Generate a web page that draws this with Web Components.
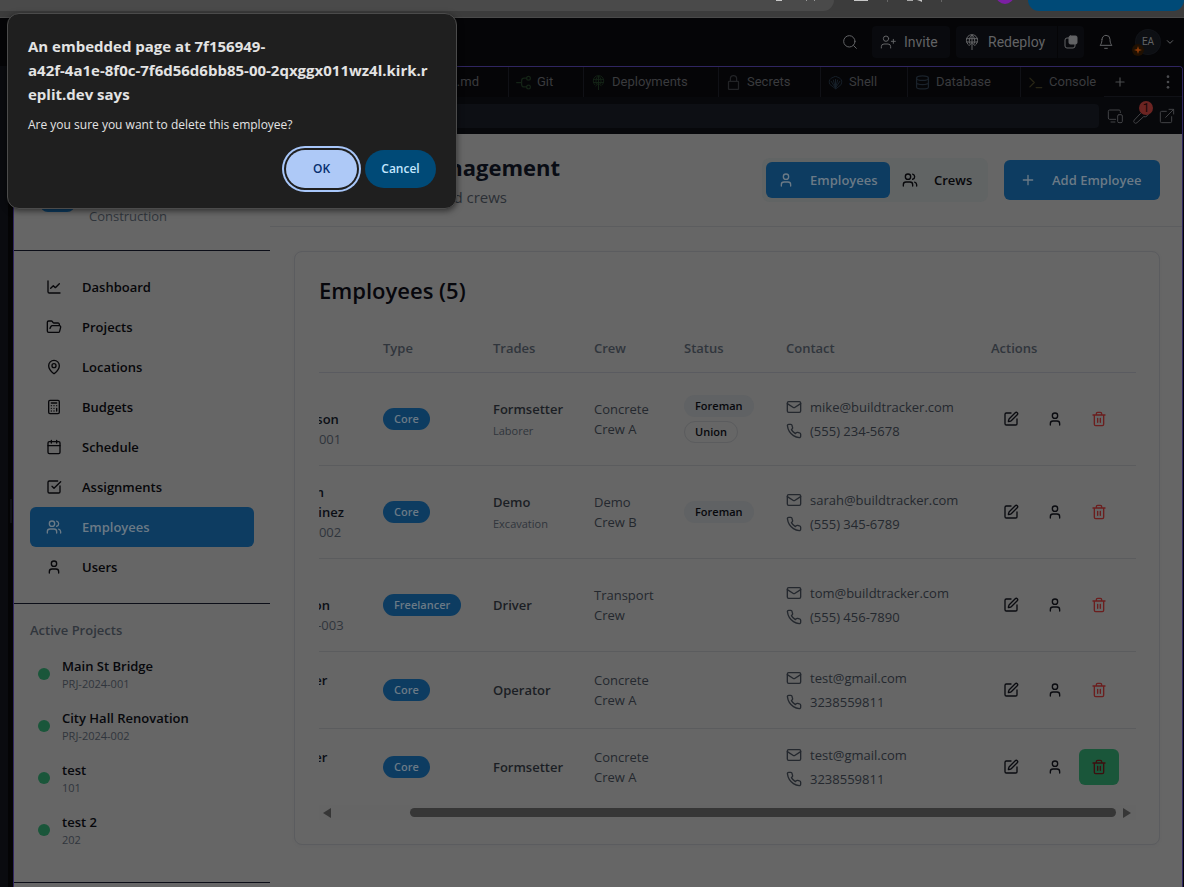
<!DOCTYPE html>
<html lang="en">
<head>
<meta charset="utf-8">
<title>BuildTracker – Employees</title>
<style>
  html, body { margin: 0; height: 100%; }
  body {
    background: #050507;
    overflow: hidden;
    font-family: "Open Sans", "Noto Sans", sans-serif;
    font-size: 13px;
    line-height: 20px;
    color: #07080c;
  }
</style>
</head>
<body>
<app-window></app-window>
<confirm-dialog origin-a="An embedded page at 7f156949-" origin-b="a42f-4a1e-8f0c-7f6d56d6bb85-00-2qxggx011wz4l.kirk.r" origin-c="eplit.dev says">Are you sure you want to delete this employee?</confirm-dialog>

<script>
const ICONS = {
  chart: '<path d="M3 3v16a2 2 0 0 0 2 2h16"/><path d="m7 14 4-4 3 3 6-6"/>',
  folder: '<path d="m6 14 1.5-2.9A2 2 0 0 1 9.24 10H20a2 2 0 0 1 1.94 2.5l-1.54 6a2 2 0 0 1-1.95 1.5H4a2 2 0 0 1-2-2V5a2 2 0 0 1 2-2h3.9a2 2 0 0 1 1.69.9l.81 1.2a2 2 0 0 0 1.67.9H18a2 2 0 0 1 2 2v2"/>',
  pin: '<path d="M20 10c0 5-5.5 10.2-7.4 11.8a1 1 0 0 1-1.2 0C9.500 20.200 4 15 4 10a8 8 0 0 1 16 0"/><circle cx="12" cy="10" r="3"/>',
  calculator: '<rect width="16" height="20" x="4" y="2" rx="2"/><path d="M8 6h8M16 14v4M16 10h.01M12 10h.01M8 10h.01M12 14h.01M8 14h.01M12 18h.01M8 18h.01"/>',
  calendar: '<path d="M8 2v4M16 2v4M3 10h18"/><rect width="18" height="18" x="3" y="4" rx="2"/>',
  check: '<path d="M21 10.500V19a2 2 0 0 1-2 2H5a2 2 0 0 1-2-2V5a2 2 0 0 1 2-2h12.500"/><path d="m9 11 3 3L22 4"/>',
  users: '<path d="M16 21v-2a4 4 0 0 0-4-4H6a4 4 0 0 0-4 4v2"/><circle cx="9" cy="7" r="4"/><path d="M22 21v-2a4 4 0 0 0-3-3.870M16 3.130a4 4 0 0 1 0 7.750"/>',
  user: '<path d="M19 21v-2a4 4 0 0 0-4-4H9a4 4 0 0 0-4 4v2"/><circle cx="12" cy="7" r="4"/>',
  userplus: '<path d="M16 21v-2a4 4 0 0 0-4-4H6a4 4 0 0 0-4 4v2"/><circle cx="9" cy="7" r="4"/><path d="M20 8v6M23 11h-6"/>',
  plus: '<path d="M5 12h14M12 5v14"/>',
  mail: '<rect width="20" height="16" x="2" y="4" rx="2"/><path d="m22 7-8.970 5.700a1.940 1.940 0 0 1-2.060 0L2 7"/>',
  phone: '<path d="M22 16.920v3a2 2 0 0 1-2.180 2 19.790 19.790 0 0 1-8.630-3.070 19.500 19.500 0 0 1-6-6 19.790 19.790 0 0 1-3.070-8.670A2 2 0 0 1 4.110 2h3a2 2 0 0 1 2 1.720c.127.960.361 1.903.700 2.810a2 2 0 0 1-.450 2.110L8.090 9.910a16 16 0 0 0 6 6l1.270-1.270a2 2 0 0 1 2.110-.450c.907.339 1.850.573 2.810.700A2 2 0 0 1 22 16.920z"/>',
  edit: '<path d="M12 3H5a2 2 0 0 0-2 2v14a2 2 0 0 0 2 2h14a2 2 0 0 0 2-2v-7"/><path d="M18.375 2.625a1 1 0 0 1 3 3l-9.013 9.014a2 2 0 0 1-.853.505l-2.873.840a.5.5 0 0 1-.620-.620l.840-2.873a2 2 0 0 1 .506-.852z"/>',
  trash: '<path d="M3 6h18M19 6v14a2 2 0 0 1-2 2H7a2 2 0 0 1-2-2V6M8 6V4a2 2 0 0 1 2-2h4a2 2 0 0 1 2 2v2M10 11v6M14 11v6"/>',
  search: '<circle cx="11" cy="11" r="8.500"/><path d="m17.500 17.500 4 4"/>',
  globe: '<path d="M6 15.500a8.500 8.500 0 1 1 12 0M12 24V13M7.500 17.500 12 13l4.500 4.500M4 7h16M4 12h16M8.500 14c-1.500-4-.500-10 3.500-12.500 4 2.500 5 8.500 3.500 12.500M12 1.500V13"/>',
  windows: '<path d="M9 6H6a3 3 0 0 0-3 3v9a3 3 0 0 0 3 3h9a3 3 0 0 0 3-3v-3"/><rect x="9" y="3" width="12" height="12" rx="2" fill="currentColor"/>',
  bell: '<path d="M6 8a6 6 0 0 1 12 0c0 7 3 9 3 9H3s3-2 3-9M10 21.500h4"/>',
  chevron: '<path d="m4 8 8 8 8-8"/>',
  git: '<path d="M1 12h8M17 5h-4a4 4 0 0 0-4 4v6a4 4 0 0 0 4 4h4"/><circle cx="20" cy="5" r="3"/><circle cx="20" cy="19" r="3"/>',
  lock: '<rect x="4" y="10" width="16" height="13" rx="1"/><path d="M7 10V6a5 5 0 0 1 10 0v4"/>',
  shell: '<path d="M12 22 3 15a9 9 0 0 1-1-5C3 6 6 4 8 4c1-2 7-2 8 0 2 0 5 2 6 6a9 9 0 0 1-1 5zM12 21 5 10M12 21 8.500 8M12 21V7M12 21l3.500-13M12 21l7-11"/>',
  database: '<ellipse cx="12" cy="5" rx="9.500" ry="3.500"/><path d="M2.500 5v14c0 4.500 19 4.500 19 0V5M2.500 12c0 4.500 19 4.500 19 0"/>',
  console: '<path d="m3 5 7 7-7 7M13 20h9"/>',
  dots: '<g fill="currentColor" stroke="none"><circle cx="12" cy="4" r="2"/><circle cx="12" cy="12" r="2"/><circle cx="12" cy="20" r="2"/></g>',
  devices: '<path d="M13 17H4a2 2 0 0 1-2-2V5a2 2 0 0 1 2-2h14a2 2 0 0 1 2 2v2M6 21h6"/><rect x="16" y="10" width="7" height="12" rx="2"/>',
  wrench: '<path d="M15 6a5 5 0 0 1 6-3l-3 4 2 2 3-2a5.500 5.500 0 0 1-7 6L6 22a2.500 2.500 0 0 1-4-4l9-9.500A5.500 5.500 0 0 1 15 6z"/>',
  external: '<path d="M11 5H4a2 2 0 0 0-2 2v13a2 2 0 0 0 2 2h13a2 2 0 0 0 2-2v-7M15 2h7v7M22 2 10 14"/>'
};

class BaseElement extends HTMLElement {
  connectedCallback() {
    if (this.shadowRoot) return;
    this.attachShadow({ mode: 'open' }).innerHTML = this.render();
  }
  attr(name, fallback = '') { return this.getAttribute(name) ?? fallback; }
}

customElements.define('ui-icon', class extends BaseElement {
  render() {
    const size = this.attr('size', '16');
    return `<style>
      :host { display: inline-flex; flex: none; }
      svg { display: block; fill: none; stroke: currentColor; stroke-linecap: round; stroke-linejoin: round; }
    </style>
    <svg width="${size}" height="${size}" viewBox="0 0 24 24" stroke-width="${this.attr('weight', '2')}" aria-hidden="true">${ICONS[this.attr('name')]}</svg>`;
  }
});

customElements.define('browser-strip', class extends BaseElement {
  render() {
    return `<style>
      :host { display: flex; height: 17px; flex: none; align-items: flex-start; background: #3c3c3c; border-bottom: 1px solid #4a4a4a; overflow: hidden; }
      .omnibox { flex: 1; display: flex; justify-content: flex-end; height: 11px; background: #4a4a4a; border-radius: 0 0 18px 0; }
      svg { flex: none; display: block; }
      .update { width: 156px; height: 11px; background: #004a77; border-radius: 0 0 18px 18px; }
    </style>
    <div class="omnibox"><svg width="60" height="4" aria-hidden="true"><rect x="2" width="6" height="1" fill="#c7c7c7"/><rect x="32" width="1" height="1" fill="#999"/><rect x="40" width="1" height="1" fill="#999"/></svg></div>
    <svg width="194" height="12" aria-hidden="true">
      <rect x="20" width="14" height="1" fill="#c7c7c7"/><rect x="53" width="1" height="2" fill="#666"/>
      <rect x="73" width="6" height="1" fill="#aaa"/><path d="M83 0h5v2l-2-1z" fill="#c7c7c7"/><rect x="107" width="1" height="2" fill="#666"/>
      <circle cx="171" cy="-5" r="9" fill="#7b1fa2"/>
    </svg>
    <div class="update"></div>`;
  }
});

customElements.define('workspace-bar', class extends BaseElement {
  render() {
    return `<style>
      :host { display: flex; height: 48px; flex: none; align-items: center; justify-content: flex-end; box-sizing: border-box; padding-right: 10px; background: #050507; color: #626365; font: 14px/20px Roboto, sans-serif; }
      button { display: flex; align-items: center; height: 32px; border: 0; padding: 0 8px; background: #090a0e; border-radius: 4px; color: inherit; font: inherit; gap: 8px; }
      .plain { background: none; }
      .search { margin-right: 6px; }
      .invite { margin-right: 6px; width: 78px; }
      .deploy { width: 101px; border-radius: 4px 0 0 4px; margin-right: 1px; }
      .panes { width: 26px; padding: 0 5px; border-radius: 0 4px 4px 0; margin-right: 6px; }
      .account { padding: 0 0 0 14px; gap: 6px; }
      .avatar { position: relative; width: 24px; height: 24px; border-radius: 50%; background: #0d0f13; box-shadow: 0 0 0 1px #111318; font-size: 10px; line-height: 24px; text-align: center; }
      .star { position: absolute; left: -4px; bottom: -2px; width: 12px; height: 12px; }
    </style>
    <button class="plain search" aria-label="Search"><ui-icon name="search" weight="1.500"></ui-icon></button>
    <button class="invite"><ui-icon name="userplus" weight="1.500"></ui-icon>Invite</button>
    <button class="deploy"><ui-icon name="globe" weight="1.500"></ui-icon>Redeploy</button>
    <button class="panes" aria-label="Panes"><ui-icon name="windows" weight="1.500"></ui-icon></button>
    <button class="plain" aria-label="Notifications"><ui-icon name="bell" weight="1.500"></ui-icon></button>
    <button class="plain account"><span class="avatar">EA<svg class="star" viewBox="0 0 12 12" aria-hidden="true"><circle cx="6" cy="6" r="6" fill="#1f1002"/><path d="M6 2 7 5l3 1-3 1-1 3-1-3-3-1 3-1z" fill="#8a3a08"/></svg></span><ui-icon name="chevron" size="8" weight="3"></ui-icon></button>`;
  }
});

customElements.define('workspace-tab', class extends BaseElement {
  render() {
    return `<style>
      :host { display: flex; align-items: center; box-sizing: border-box; height: 30px; gap: 6px; padding-left: 7px; border-left: 1px solid #101116; color: #3a3b3e; white-space: nowrap; }
      ui-icon { color: ${this.attr('tint')}; }
    </style>
    ${this.attr('icon') ? `<ui-icon name="${this.attr('icon')}" size="15" weight="${this.attr('weight', '2')}"></ui-icon>` : ''}<slot></slot>`;
  }
});

customElements.define('workspace-tabs', class extends BaseElement {
  render() {
    return `<style>
      :host { display: grid; grid-template-columns: minmax(0, 1fr) 75px 135px 102px 87px 113px 84px 78px; height: 30px; flex: none; background: #050507; font: 13px/20px Roboto, sans-serif; }
      .file { justify-content: flex-end; padding-right: 29px; border-left: 0; }
      .tools { display: flex; align-items: center; justify-content: space-between; padding: 0 6px 0 9px; border-bottom: 1px solid #101116; color: #4b4c4f; }
      button { display: flex; border: 0; padding: 0; background: none; color: inherit; }
    </style>
    <workspace-tab class="file">replit.md</workspace-tab>
    <workspace-tab icon="git" tint="#142316">Git</workspace-tab>
    <workspace-tab icon="globe" tint="#142316" weight="1.500">Deployments</workspace-tab>
    <workspace-tab icon="lock" tint="#222326">Secrets</workspace-tab>
    <workspace-tab icon="shell" tint="#18212b" weight="1.500">Shell</workspace-tab>
    <workspace-tab icon="database" tint="#1a222b">Database</workspace-tab>
    <workspace-tab icon="console" tint="#292615">Console</workspace-tab>
    <div class="tools"><button aria-label="New tab"><ui-icon name="plus" size="14"></ui-icon></button><button aria-label="More"><ui-icon name="dots"></ui-icon></button></div>`;
  }
});

customElements.define('address-bar', class extends BaseElement {
  render() {
    return `<style>
      :host { display: flex; height: 37px; flex: none; box-sizing: border-box; align-items: center; padding: 0 7px 0 8px; gap: 8px; background: #07080b; color: #424346; }
      input { flex: 1; height: 24px; box-sizing: border-box; border: 0; border-radius: 4px; background: #0d0f14; }
      button { position: relative; display: flex; border: 0; padding: 0; background: none; color: inherit; }
      .icons { display: flex; gap: 10px; }
      .badge { position: absolute; right: -4px; top: -7px; width: 14px; height: 14px; border-radius: 50%; background: #6b2422; color: #160707; font: 12px/14px Roboto, sans-serif; text-align: center; }
    </style>
    <input aria-label="Address">
    <div class="icons">
      <button aria-label="Devices"><ui-icon name="devices" weight="1.500"></ui-icon></button>
      <button aria-label="Developer tools"><ui-icon name="wrench" weight="1.500"></ui-icon><span class="badge">1</span></button>
      <button aria-label="Open in new tab"><ui-icon name="external" weight="1.500"></ui-icon></button>
    </div>`;
  }
});

customElements.define('nav-item', class extends BaseElement {
  render() {
    return `<style>
      :host { display: block; }
      a { display: flex; align-items: center; gap: 20px; height: 40px; padding-left: 16px; border-radius: 6px; color: #07070a; font-weight: 600; text-decoration: none; }
      :host([active]) a { background: #0d3c61; color: #6b7a86; }
    </style>
    <a href="#"><ui-icon name="${this.attr('icon')}"></ui-icon><slot></slot></a>`;
  }
});

customElements.define('project-item', class extends BaseElement {
  render() {
    return `<style>
      :host { display: grid; grid-template-columns: 12px 1fr; column-gap: 12px; align-items: center; height: 36px; padding: 8px; }
      i { width: 12px; height: 12px; border-radius: 50%; background: #1a563a; }
      b { display: block; font-weight: 600; line-height: 20px; }
      small { display: block; font-size: 11px; line-height: 16px; color: #30353c; }
    </style>
    <i></i><div><b><slot></slot></b><small>${this.attr('code')}</small></div>`;
  }
});

customElements.define('side-bar', class extends BaseElement {
  render() {
    return `<style>
      :host { display: flex; flex-direction: column; width: 256px; flex: none; }
      header { display: flex; align-items: flex-end; gap: 14px; height: 117px; box-sizing: border-box; padding: 0 26px 24px; border-bottom: 1px solid #0c0e18; }
      .logo { width: 35px; height: 40px; margin-bottom: 14px; border-radius: 8px; background: #0d3c61; }
      strong { display: block; font-size: 18px; line-height: 28px; }
      header span { display: block; color: #30353c; }
      nav { padding: 16px; border-bottom: 1px solid #0c0e18; }
      section { padding: 16px 16px 26px; border-bottom: 1px solid #0c0e18; }
      h2 { margin: 0 0 8px; font-size: 13px; line-height: 20px; font-weight: 600; color: #30353c; }
    </style>
    <header><div class="logo"></div><div><strong>BuildTracker</strong><span>Construction</span></div></header>
    <nav>
      <nav-item icon="chart">Dashboard</nav-item>
      <nav-item icon="folder">Projects</nav-item>
      <nav-item icon="pin">Locations</nav-item>
      <nav-item icon="calculator">Budgets</nav-item>
      <nav-item icon="calendar">Schedule</nav-item>
      <nav-item icon="check">Assignments</nav-item>
      <nav-item icon="users" active>Employees</nav-item>
      <nav-item icon="user">Users</nav-item>
    </nav>
    <section>
      <h2>Active Projects</h2>
      <project-item code="PRJ-2024-001">Main St Bridge</project-item>
      <project-item code="PRJ-2024-002">City Hall Renovation</project-item>
      <project-item code="101">test</project-item>
      <project-item code="202">test 2</project-item>
    </section>`;
  }
});

customElements.define('page-header', class extends BaseElement {
  render() {
    return `<style>
      :host { display: flex; align-items: center; height: 92px; flex: none; padding: 0 22px 0 24px; border-bottom: 1px solid #5c5d5f; }
      .titles { width: 266px; padding-top: 4px; text-align: right; white-space: nowrap; }
      h1 { margin: 0; font-size: 22px; line-height: 30px; font-weight: 700; color: #090c14; }
      p { margin: 0; padding-right: 53px; font-size: 15px; line-height: 30px; color: #2b2f35; }
      .actions { display: flex; align-items: center; gap: 16px; margin-left: auto; }
      .toggle { display: flex; padding: 4px; height: 36px; border-radius: 8px; background: #616464; }
      button { display: flex; align-items: center; gap: 16px; border: 0; border-radius: 6px; background: none; color: #07070a; font: inherit; font-weight: 600; padding: 0 12px; height: 36px; }
      .primary { background: #0d3c61; color: #6b7a86; }
      .employees { width: 124px; }
      .crews { width: 94px; }
      .add { width: 156px; height: 40px; padding: 0 16px; }
    </style>
    <div class="titles"><h1>Employee Management</h1><p>Manage employees and crews</p></div>
    <div class="actions">
      <div class="toggle"><button class="primary employees"><ui-icon name="user"></ui-icon>Employees</button><button class="crews"><ui-icon name="users"></ui-icon>Crews</button></div>
      <button class="primary add"><ui-icon name="plus"></ui-icon>Add Employee</button>
    </div>`;
  }
});

customElements.define('pill-badge', class extends BaseElement {
  render() {
    return `<style>
      :host { display: flex; box-sizing: border-box; width: max-content; height: 22px; padding: 0 10px; border: 1px solid transparent; border-radius: 11px; font-size: 11px; line-height: 20px; font-weight: 600; }
      :host([kind=primary]) { background: #0d3c61; color: #6b7a86; }
      :host([kind=soft]) { background: #606264; }
      :host([kind=outline]) { border-color: #5b5c5e; }
    </style><slot></slot>`;
  }
});

const EMPLOYEES = [
  { name: 'Mike Johnson', id: 'EMP-001', type: 'Core', trade: 'Formsetter', second: 'Laborer', crew: 'Concrete<br>Crew A', status: ['Foreman', 'Union'], mail: 'mike@buildtracker.com', phone: '(555) 234-5678' },
  { name: 'Sarah Martinez', id: 'EMP-002', type: 'Core', trade: 'Demo', second: 'Excavation', crew: 'Demo<br>Crew B', status: ['Foreman'], mail: 'sarah@buildtracker.com', phone: '(555) 345-6789' },
  { name: 'Tom Wilson', id: 'FREE-003', type: 'Freelancer', trade: 'Driver', crew: 'Transport<br>Crew', status: [], mail: 'tom@buildtracker.com', phone: '(555) 456-7890' },
  { name: 'Tester', id: '101', type: 'Core', trade: 'Operator', crew: 'Concrete<br>Crew A', status: [], mail: 'test@gmail.com', phone: '3238559811' },
  { name: 'Tester', id: '102', type: 'Core', trade: 'Formsetter', crew: 'Concrete<br>Crew A', status: [], mail: 'test@gmail.com', phone: '3238559811', hot: true }
];

customElements.define('employee-table', class extends BaseElement {
  render() {
    const rows = EMPLOYEES.map(e => `<tr>
      <td><div class="who"><span class="face"></span><div><b>${e.name.replace(' ', '<br>')}</b><span class="id">${e.id}</span></div></div></td>
      <td><pill-badge kind="primary">${e.type}</pill-badge></td>
      <td><b class="trade">${e.trade}</b>${e.second ? `<small>${e.second}</small>` : ''}</td>
      <td class="crew">${e.crew}</td>
      <td><div class="status">${e.status.map(s => `<pill-badge kind="${s === 'Union' ? 'outline' : 'soft'}">${s}</pill-badge>`).join('')}</div></td>
      <td><div class="contact"><span><ui-icon name="mail"></ui-icon>${e.mail}</span><span><ui-icon name="phone"></ui-icon>${e.phone}</span></div></td>
      <td><div class="actions"><button aria-label="Edit"><ui-icon name="edit"></ui-icon></button><button aria-label="Profile"><ui-icon name="user"></ui-icon></button><button aria-label="Delete" class="delete${e.hot ? ' hot' : ''}"><ui-icon name="trash"></ui-icon></button></div></td>
    </tr>`).join('');
    return `<style>
      :host { display: block; }
      .viewport { overflow: hidden; display: flex; justify-content: flex-end; }
      table { flex: none; width: calc(100% + 97px); table-layout: fixed; border-collapse: separate; border-spacing: 0; }
      th { height: 49px; box-sizing: border-box; padding: 0 0 0 16px; border-bottom: 1px solid #5a5b60; text-align: left; font-weight: 600; color: #30353c; }
      td { box-sizing: border-box; padding: 16px 0 16px 16px; border-bottom: 1px solid #5b5c5e; vertical-align: middle; }
      tr:last-child td { border-bottom: 0; }
      b { font-weight: 600; display: block; }
      .who { display: flex; align-items: center; gap: 10px; color: #0b0e15; }
      .face { flex: none; width: 40px; height: 40px; border-radius: 50%; background: #5c6165; }
      .id { color: #30353c; }
      .trade { color: #1b1e24; }
      .crew { color: #24282e; }
      small { display: block; margin-top: 4px; font-size: 11px; line-height: 16px; color: #30353c; }
      .status { display: grid; gap: 4px; }
      .contact { display: grid; gap: 4px; color: #24282e; }
      .contact span { display: flex; align-items: center; gap: 8px; height: 20px; white-space: nowrap; }
      .actions { display: flex; gap: 4px; }
      button { width: 40px; height: 36px; display: flex; align-items: center; justify-content: center; border: 0; padding: 0; border-radius: 6px; background: none; color: #0a0b10; }
      .delete { color: #6b1e1e; }
      .hot { background: #1a563a; color: #3d0f0f; }
      .scroll { display: grid; grid-template-columns: 15px 1fr 20px; align-items: center; height: 15px; background: #656565; }
      .scroll svg { display: block; justify-self: end; }
      .thumb { height: 9px; margin-left: 76px; border-radius: 5px; background: #363636; }
      .scroll svg:first-child { justify-self: center; }
      .scroll svg:last-child { margin-right: 5px; }
    </style>
    <div class="viewport"><table>
      <colgroup><col style="width:145px"><col style="width:110px"><col style="width:101px"><col style="width:90px"><col style="width:102px"><col><col style="width:161px"></colgroup>
      <thead><tr><th>Name</th><th>Type</th><th>Trades</th><th>Crew</th><th>Status</th><th>Contact</th><th>Actions</th></tr></thead>
      <tbody>${rows}</tbody>
    </table></div>
    <div class="scroll"><svg width="8" height="10" aria-hidden="true"><path d="M8 0v10L0 5z" fill="#363636"/></svg><div class="thumb"></div><svg width="8" height="10" aria-hidden="true"><path d="M0 0v10l8-5z" fill="#363636"/></svg></div>`;
  }
});

customElements.define('content-card', class extends BaseElement {
  render() {
    return `<style>
      :host { display: block; margin: 24px 22px 0 24px; padding: 24px 23px 24px 24px; border: 1px solid #5b5c5f; border-radius: 8px; box-shadow: 0 1px 2px #6061634d; }
      h2 { margin: 0 0 20px; font-size: 22px; line-height: 28px; font-weight: 600; color: #07070c; }
    </style>
    <h2>${this.attr('heading')}</h2><slot></slot>`;
  }
});

customElements.define('app-window', class extends BaseElement {
  render() {
    return `<style>
      :host { display: flex; flex-direction: column; height: 100vh; min-height: 600px; }
      .work { flex: 1; min-height: 0; display: grid; grid-template-columns: 13px minmax(0, 1fr) 1px; }
      .rail { display: flex; align-items: center; justify-content: flex-end; background: linear-gradient(90deg, #0a0b0f 8px, #040405 8px); }
      .rail i { width: 2px; height: 24px; margin: 68px 1px 0 0; background: #101116; }
      .pane { display: flex; flex-direction: column; overflow: hidden; border: 1px solid #2f2560; border-bottom: 0; border-radius: 0 4px 0 0; }
      .app { flex: 1; min-height: 0; display: flex; background: #666; }
      main { flex: 1; min-width: 0; }
    </style>
    <browser-strip></browser-strip>
    <workspace-bar></workspace-bar>
    <div class="work">
      <div class="rail"><i></i></div>
      <div class="pane">
        <workspace-tabs></workspace-tabs>
        <address-bar></address-bar>
        <div class="app">
          <side-bar></side-bar>
          <main>
            <page-header></page-header>
            <content-card heading="Employees (5)"><employee-table></employee-table></content-card>
          </main>
        </div>
      </div>
    </div>`;
  }
});

customElements.define('confirm-dialog', class extends BaseElement {
  render() {
    return `<style>
      :host { position: absolute; left: 7px; top: 13px; }
      dialog { position: static; display: block; box-sizing: border-box; width: 450px; margin: 0; padding: 20px; border: 1px solid #4b4b4b; border-radius: 12px; background: #1f1f1f; color: #e3e3e3; box-shadow: 0 2px 6px #0008; }
      h1 { margin: 0 0 8px; font-size: 15px; line-height: 24px; font-weight: 700; white-space: nowrap; }
      h1 span { display: block; }
      p { margin: 0; font-size: 12px; line-height: 22px; }
      footer { display: flex; justify-content: flex-end; gap: 8px; margin-top: 14px; }
      button { width: 71px; height: 38px; border: 0; border-radius: 19px; padding: 0; font: 600 12px/20px "Open Sans", sans-serif; }
      .ok { background: #aec9f7; color: #062e6f; box-shadow: 0 0 0 2px #1f1f1f, 0 0 0 4px #a8c7fa; }
      .cancel { background: #004a77; color: #c2e7ff; }
    </style>
    <dialog open aria-labelledby="t">
      <h1 id="t"><span>${this.attr('origin-a')}</span><span>${this.attr('origin-b')}</span><span>${this.attr('origin-c')}</span></h1>
      <p><slot></slot></p>
      <footer><button class="ok">OK</button><button class="cancel">Cancel</button></footer>
    </dialog>`;
  }
});
</script>
</body>
</html>
